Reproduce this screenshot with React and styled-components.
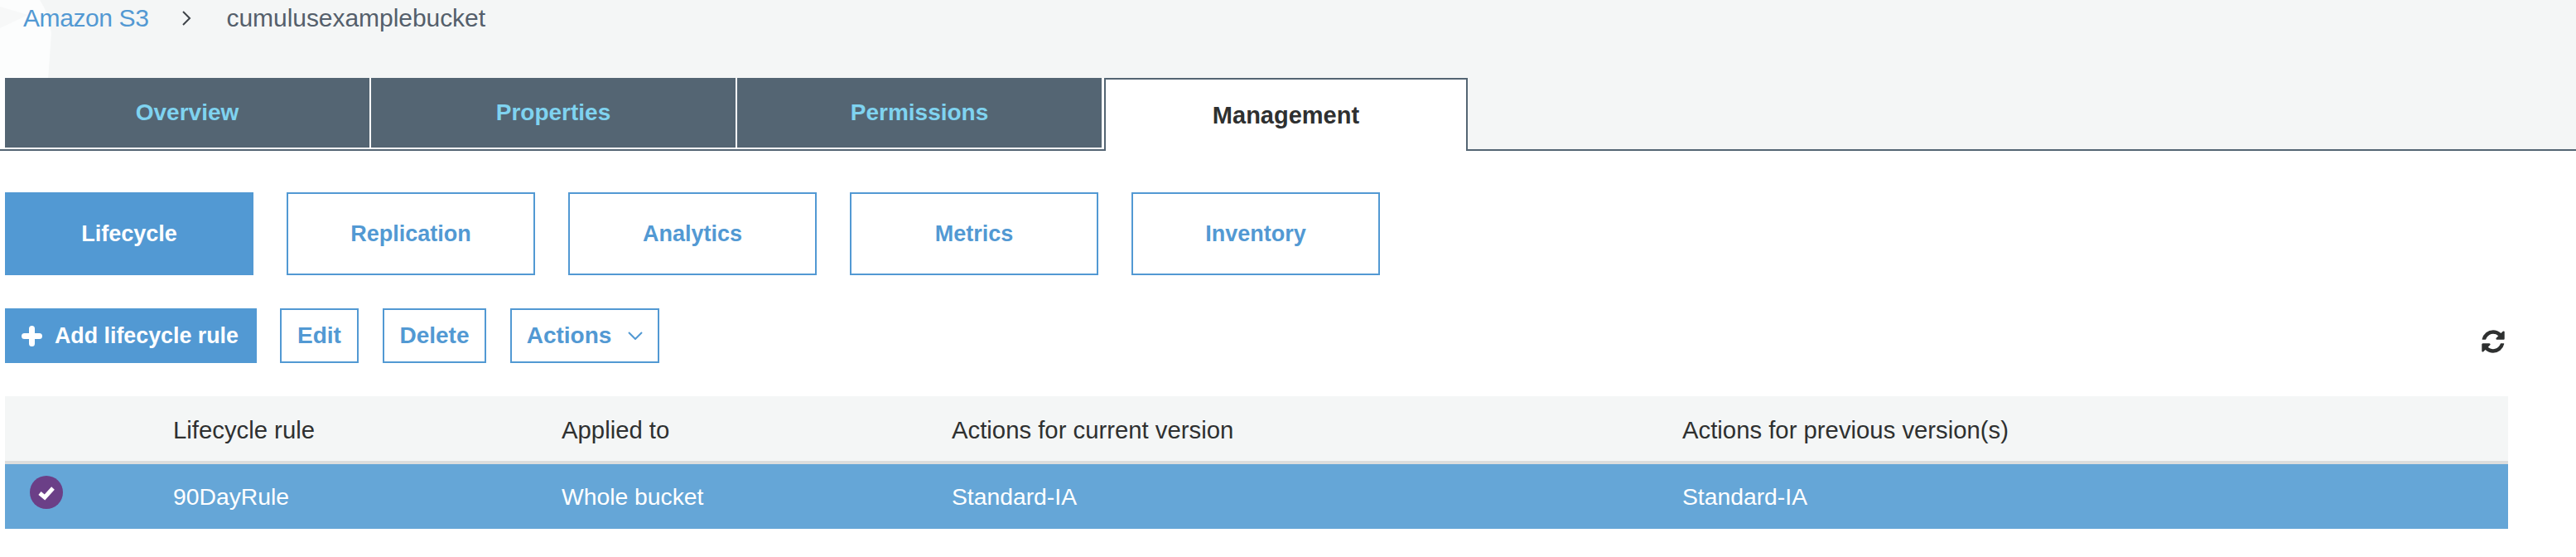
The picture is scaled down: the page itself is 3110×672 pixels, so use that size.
import { createGlobalStyle, styled } from "styled-components";

const GlobalStyle = createGlobalStyle`
  html, body {
    margin: 0;
    background: #fff;
  }
  body {
    font-family: "Liberation Sans", Arial, sans-serif;
    font-size: 28px;
    color: #2e3030;
  }
`;

const Page = styled.div`
  width: 3110px;
  height: 672px;
  overflow: hidden;
  background: #fff;
`;

const Header = styled.header`
  position: relative;
  height: 182px;
  background: #f4f6f6;
  display: flex;
  flex-direction: column;
  justify-content: space-between;
`;

const Blob = styled.svg`
  position: absolute;
  left: 0;
  top: 0;
`;

const Breadcrumb = styled.nav`
  position: relative;
  display: flex;
  align-items: center;
  height: 44px;
  padding-left: 28px;
  font-size: 30px;
`;

const CrumbLink = styled.span`
  color: #5299d3;
  letter-spacing: -0.4px;
`;

const CrumbCurrent = styled.span`
  color: #545f6b;
  letter-spacing: -0.05px;
`;

const CrumbSep = styled.svg`
  width: 12px;
  height: 18px;
  margin: 0 42px 0 40px;
`;

const TabBar = styled.div`
  position: relative;
  display: flex;
  align-items: flex-start;
  height: 86px;
  border-bottom: 2px solid #546573;
`;

const InactiveTabs = styled.div`
  display: flex;
  gap: 2px;
  height: 86px;
  padding: 0 3px 2px 6px;
  box-sizing: border-box;
  background: #fff;
`;

const Tab = styled.div`
  width: ${(p) => p.$width}px;
  height: 84px;
  display: flex;
  align-items: center;
  justify-content: center;
  background: #546573;
  color: #7fd3f0;
  font-weight: 700;
`;

const ActiveTab = styled.div`
  width: 439px;
  height: 88px;
  box-sizing: border-box;
  border: 2px solid #546573;
  border-bottom: none;
  background: #fff;
  display: flex;
  align-items: center;
  justify-content: center;
  font-size: 29px;
  font-weight: 700;
  color: #2e3030;
`;

const SubTabs = styled.div`
  display: flex;
  gap: 40px;
  padding: 50px 0 0 6px;
`;

const SubTab = styled.div`
  width: 300px;
  height: 100px;
  box-sizing: border-box;
  border: 2px solid #5299d3;
  background: ${(p) => (p.$active ? "#5299d3" : "#fff")};
  color: ${(p) => (p.$active ? "#fff" : "#5299d3")};
  display: flex;
  align-items: center;
  justify-content: center;
  font-size: 27px;
  font-weight: 700;
`;

const Toolbar = styled.div`
  display: flex;
  align-items: center;
  height: 66px;
  margin-top: 40px;
  padding: 0 84px 0 6px;
`;

const PrimaryButton = styled.div`
  width: 304px;
  height: 66px;
  box-sizing: border-box;
  padding-left: 20px;
  background: #5299d3;
  color: #fff;
  font-size: 26.800px;
  font-weight: 700;
  display: flex;
  align-items: center;
  gap: 15px;
  margin-right: 28px;
`;

const Button = styled.div`
  width: ${(p) => p.$width}px;
  height: 66px;
  box-sizing: border-box;
  border: 2px solid #5299d3;
  color: #5299d3;
  font-weight: 700;
  display: flex;
  align-items: center;
  justify-content: center;
  gap: 20px;
  margin-right: 29px;
`;

const RefreshIcon = styled.svg`
  width: 32px;
  height: 32px;
  margin: 14px 0 0 auto;
  color: #2e3030;
`;

const Table = styled.div`
  margin: 40px 0 0 6px;
  width: 3022px;
`;

const Row = styled.div`
  display: grid;
  grid-template-columns: 203px 469px 471px 882px 1fr;
  align-items: center;
  box-sizing: border-box;
`;

const HeadRow = styled(Row)`
  height: 82px;
  padding-top: 4px;
  background: #f4f6f6;
  border-bottom: 4px solid #dcdddd;
  color: #2e3030;
  font-size: 29.300px;
`;

const BodyRow = styled(Row)`
  height: 78px;
  background: #65a6d7;
  color: #fff;
  font-size: 28.300px;
`;

const Check = styled.svg`
  width: 40px;
  height: 40px;
  margin: -10px 0 0 30px;
`;

const tabs = [
  { name: "Overview", width: 440 },
  { name: "Properties", width: 440 },
  { name: "Permissions", width: 440 },
];

const subTabs = ["Lifecycle", "Replication", "Analytics", "Metrics", "Inventory"];

const refreshPath =
  "M1639 1056q0 5-1 7-64 268-268 434.5t-478 166.5q-146 0-282.500-55t-243.500-157l-129 129q-19 19-45 19t-45-19-19-45v-448q0-26 19-45t45-19h448q26 0 45 19t19 45-19 45l-137 137q71 66 161 102t187 36q134 0 250-65t186-179q11-17 53-117 8-23 30-23h192q13 0 22.500 9.500t9.500 22.500zm25-800v448q0 26-19 45t-45 19h-448q-26 0-45-19t-19-45 19-45l138-138q-148-137-349-137-134 0-250 65t-186 179q-11 17-53 117-8 23-30 23h-199q-13 0-22.500-9.500t-9.500-22.500v-7q65-268 270-434.500t480-166.500q146 0 284 55.500t245 156.500l130-129q19-19 45-19t45 19 19 45z";

export default function App() {
  return (
    <Page>
      <GlobalStyle />
      <Header>
        {/* faint watermark behind the breadcrumb */}
        <Blob width="70" height="180" viewBox="0 0 70 180">
          <path d="M0 0 H48 Q58 14 62 40 L52 180 H0 Z" fill="#fcfdfd" />
          <path d="M0 8 L34 18 L0 34 Z" fill="#f7f8f8" />
        </Blob>
        <Breadcrumb>
          <CrumbLink>Amazon S3</CrumbLink>
          <CrumbSep viewBox="0 0 12 18">
            <path d="M2 1l8 8-8 8" fill="none" stroke="#3d4348" strokeWidth="2" />
          </CrumbSep>
          <CrumbCurrent>cumulusexamplebucket</CrumbCurrent>
        </Breadcrumb>
        <TabBar>
          <InactiveTabs>
            {tabs.map((t) => (
              <Tab key={t.name} $width={t.width}>
                {t.name}
              </Tab>
            ))}
          </InactiveTabs>
          <ActiveTab>Management</ActiveTab>
        </TabBar>
      </Header>

      <SubTabs>
        {subTabs.map((name, i) => (
          <SubTab key={name} $active={i === 0}>
            {name}
          </SubTab>
        ))}
      </SubTabs>

      <Toolbar>
        <PrimaryButton>
          <svg width="25" height="25" viewBox="0 0 25 25">
            <path d="M12.500 3.500v18M3.500 12.500h18" stroke="#fff" strokeWidth="7" strokeLinecap="round" />
          </svg>
          Add lifecycle rule
        </PrimaryButton>
        <Button $width={95}>Edit</Button>
        <Button $width={125}>Delete</Button>
        <Button $width={180}>
          Actions
          <svg width="18" height="10" viewBox="0 0 18 10">
            <path d="M1 1l8 8 8-8" fill="none" stroke="#5299d3" strokeWidth="2" />
          </svg>
        </Button>
        <RefreshIcon viewBox="0 0 1792 1792">
          <path d={refreshPath} fill="currentColor" />
        </RefreshIcon>
      </Toolbar>

      <Table>
        <HeadRow>
          <span />
          <span>Lifecycle rule</span>
          <span>Applied to</span>
          <span>Actions for current version</span>
          <span>Actions for previous version(s)</span>
        </HeadRow>
        <BodyRow>
          <Check viewBox="0 0 40 40">
            <circle cx="20" cy="20" r="20" fill="#6b3f87" />
            <path d="M12 21l6 5 10-11" fill="none" stroke="#fff" strokeWidth="5" />
          </Check>
          <span>90DayRule</span>
          <span>Whole bucket</span>
          <span>Standard-IA</span>
          <span>Standard-IA</span>
        </BodyRow>
      </Table>
    </Page>
  );
}
